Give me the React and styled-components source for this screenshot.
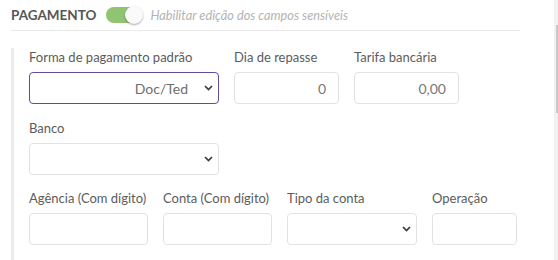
import React from "react";
import styled, { createGlobalStyle } from "styled-components";

const Global = createGlobalStyle`
  html, body { margin: 0; padding: 0; background: #fff; }
  body { font-family: Lato, "Open Sans", Arial, sans-serif; }
  * { box-sizing: border-box; }
`;

const Page = styled.div`
  display: flex;
  width: 558px;
  height: 260px;
  overflow: hidden;
`;

const Main = styled.div`
  flex: 1;
  padding-left: 10px;
`;

const Header = styled.div`
  display: flex;
  align-items: center;
  width: 510px;
  height: 31px;
  padding-bottom: 1px;
  border-bottom: 1px solid #ebebeb;
`;

const Title = styled.span`
  font-size: 13.5px;
  font-weight: 700;
  color: #565656;
  margin-left: 1px;
`;

const Switch = styled.span`
  position: relative;
  display: inline-block;
  width: 36px;
  height: 16px;
  margin-left: 10px;
  border-radius: 8px;
  background: #8fc470;
`;

const Knob = styled.span`
  position: absolute;
  top: -1px;
  right: -1px;
  width: 18px;
  height: 18px;
  border-radius: 50%;
  background: #fafafa;
  box-shadow: 0 1px 2px rgba(0, 0, 0, 0.35);
`;

const Hint = styled.span`
  margin-left: 8px;
  font-size: 12.75px;
  font-style: italic;
  color: #b3b3b3;
`;

const Section = styled.div`
  margin-top: 17px;
  margin-left: 1px;
  border-left: 3px solid #ececec;
  padding-left: 15px;
  height: 220px;
  display: flex;
  flex-direction: column;
`;

const Row = styled.div`
  display: flex;
  gap: 15px;
  margin-top: ${(p) => p.$mt || 0}px;
`;

const Field = styled.div`
  display: flex;
  flex-direction: column;
  width: ${(p) => p.$w}px;
`;

const Label = styled.label`
  font-size: 13px;
  line-height: 19px;
  color: #5c5c5c;
  white-space: nowrap;
  margin-bottom: 5px;
`;

const TextInput = styled.input`
  width: 100%;
  height: 32px;
  border: 1px solid #e2e2e2;
  border-radius: 4px;
  padding: 0 12px;
  text-align: right;
  font-family: Lato, Arial, sans-serif;
  font-size: 14px;
  color: #777;
  background: #fff;
  outline: none;
`;

const SelectBox = styled.div`
  display: flex;
  align-items: center;
  justify-content: flex-end;
  height: 32px;
  border: 1px solid ${(p) => (p.$focused ? "#634a9e" : "#e2e2e2")};
  border-radius: 4px;
  padding: 0 5px 0 12px;
  font-size: 14px;
  color: #6e6e6e;
  background: #fff;
`;

const SelectValue = styled.span`
  margin-right: 16px;
`;

const Chevron = () => (
  <svg width="9" height="6" viewBox="0 0 9 6">
    <polyline points="1,1 4.5,4.5 8,1" fill="none" stroke="#3a3a3a" strokeWidth="1.7" />
  </svg>
);

const ScrollTrack = styled.div`
  width: 4px;
  height: 100%;
  background: #f1f1f1;
  display: flex;
  justify-content: flex-end;
`;

const ScrollThumb = styled.div`
  width: 2px;
  height: 88px;
  margin-top: 25px;
  background: #c9c9c9;
`;

const Select = ({ value, focused }) => (
  <SelectBox $focused={focused}>
    {value && <SelectValue>{value}</SelectValue>}
    <Chevron />
  </SelectBox>
);

export default function App() {
  return (
    <>
      <Global />
      <Page>
        <Main>
          <Header>
            <Title>PAGAMENTO</Title>
            <Switch>
              <Knob />
            </Switch>
            <Hint>Habilitar edição dos campos sensíveis</Hint>
          </Header>
          <Section>
            <Row>
              <Field $w={190}>
                <Label>Forma de pagamento padrão</Label>
                <Select value="Doc/Ted" focused />
              </Field>
              <Field $w={105}>
                <Label>Dia de repasse</Label>
                <TextInput readOnly value="0" />
              </Field>
              <Field $w={105}>
                <Label>Tarifa bancária</Label>
                <TextInput readOnly value="0,00" />
              </Field>
            </Row>
            <Row $mt={15}>
              <Field $w={190}>
                <Label>Banco</Label>
                <Select />
              </Field>
            </Row>
            <Row $mt={14}>
              <Field $w={119}>
                <Label>Agência (Com dígito)</Label>
                <TextInput readOnly value="" />
              </Field>
              <Field $w={109}>
                <Label>Conta (Com dígito)</Label>
                <TextInput readOnly value="" />
              </Field>
              <Field $w={130}>
                <Label>Tipo da conta</Label>
                <Select />
              </Field>
              <Field $w={85}>
                <Label>Operação</Label>
                <TextInput readOnly value="" />
              </Field>
            </Row>
          </Section>
        </Main>
        <ScrollTrack>
          <ScrollThumb />
        </ScrollTrack>
      </Page>
    </>
  );
}
